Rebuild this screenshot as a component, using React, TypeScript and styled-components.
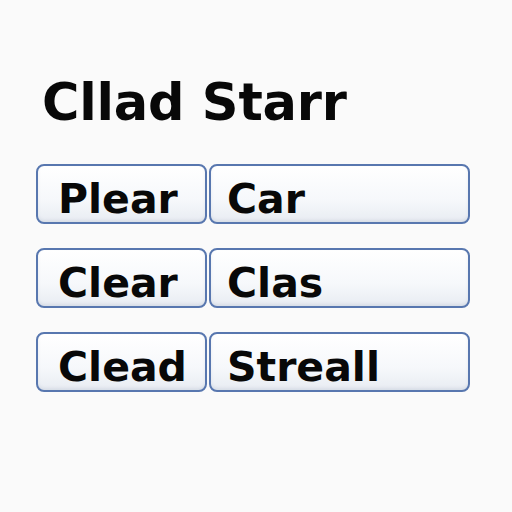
import React from "react";
import styled, { createGlobalStyle } from "styled-components";

type Row = { left: string; right: string };

const rows: Row[] = [
  { left: "Plear", right: "Car" },
  { left: "Clear", right: "Clas" },
  { left: "Clead", right: "Streall" },
];

export default function App() {
  return (
    <>
      <GlobalStyle />
      <Page>
        <Title>Cllad Starr</Title>
        <List>
          {rows.map((row) => (
            <FieldRow key={row.left}>
              <Field $wide={false}>{row.left}</Field>
              <Field $wide>{row.right}</Field>
            </FieldRow>
          ))}
        </List>
      </Page>
    </>
  );
}

const GlobalStyle = createGlobalStyle`
  html, body {
    margin: 0;
    padding: 0;
    background: #fafafa;
  }
  body {
    font-family: "DejaVu Sans", "Liberation Sans", sans-serif;
    color: #080808;
  }
`;

const Page = styled.div`
  width: 512px;
  height: 512px;
  box-sizing: border-box;
  padding: 77px 0 0 36px;
  background: #fafafa;
`;

const Title = styled.h1`
  margin: 0 0 36px 6px;
  font-size: 51px;
  line-height: 1;
  font-weight: 700;
  letter-spacing: -0.2px;
`;

const List = styled.div`
  display: flex;
  flex-direction: column;
  gap: 24px;
`;

const FieldRow = styled.div`
  display: flex;
  gap: 2px;
`;

const Field = styled.div<{ $wide: boolean }>`
  box-sizing: border-box;
  width: ${(p) => (p.$wide ? "261px" : "171px")};
  height: 60px;
  padding: 13px 0 0 ${(p) => (p.$wide ? "16px" : "20px")};
  border: 2px solid #5877af;
  border-radius: 8px;
  background: linear-gradient(#ffffff 0%, #f6f8fb 60%, #e8ecf2 100%);
  box-shadow: inset 0 -2px 3px rgba(120, 140, 170, 0.15);
  font-size: 41px;
  line-height: 1;
  font-weight: 700;
  white-space: nowrap;
`;
